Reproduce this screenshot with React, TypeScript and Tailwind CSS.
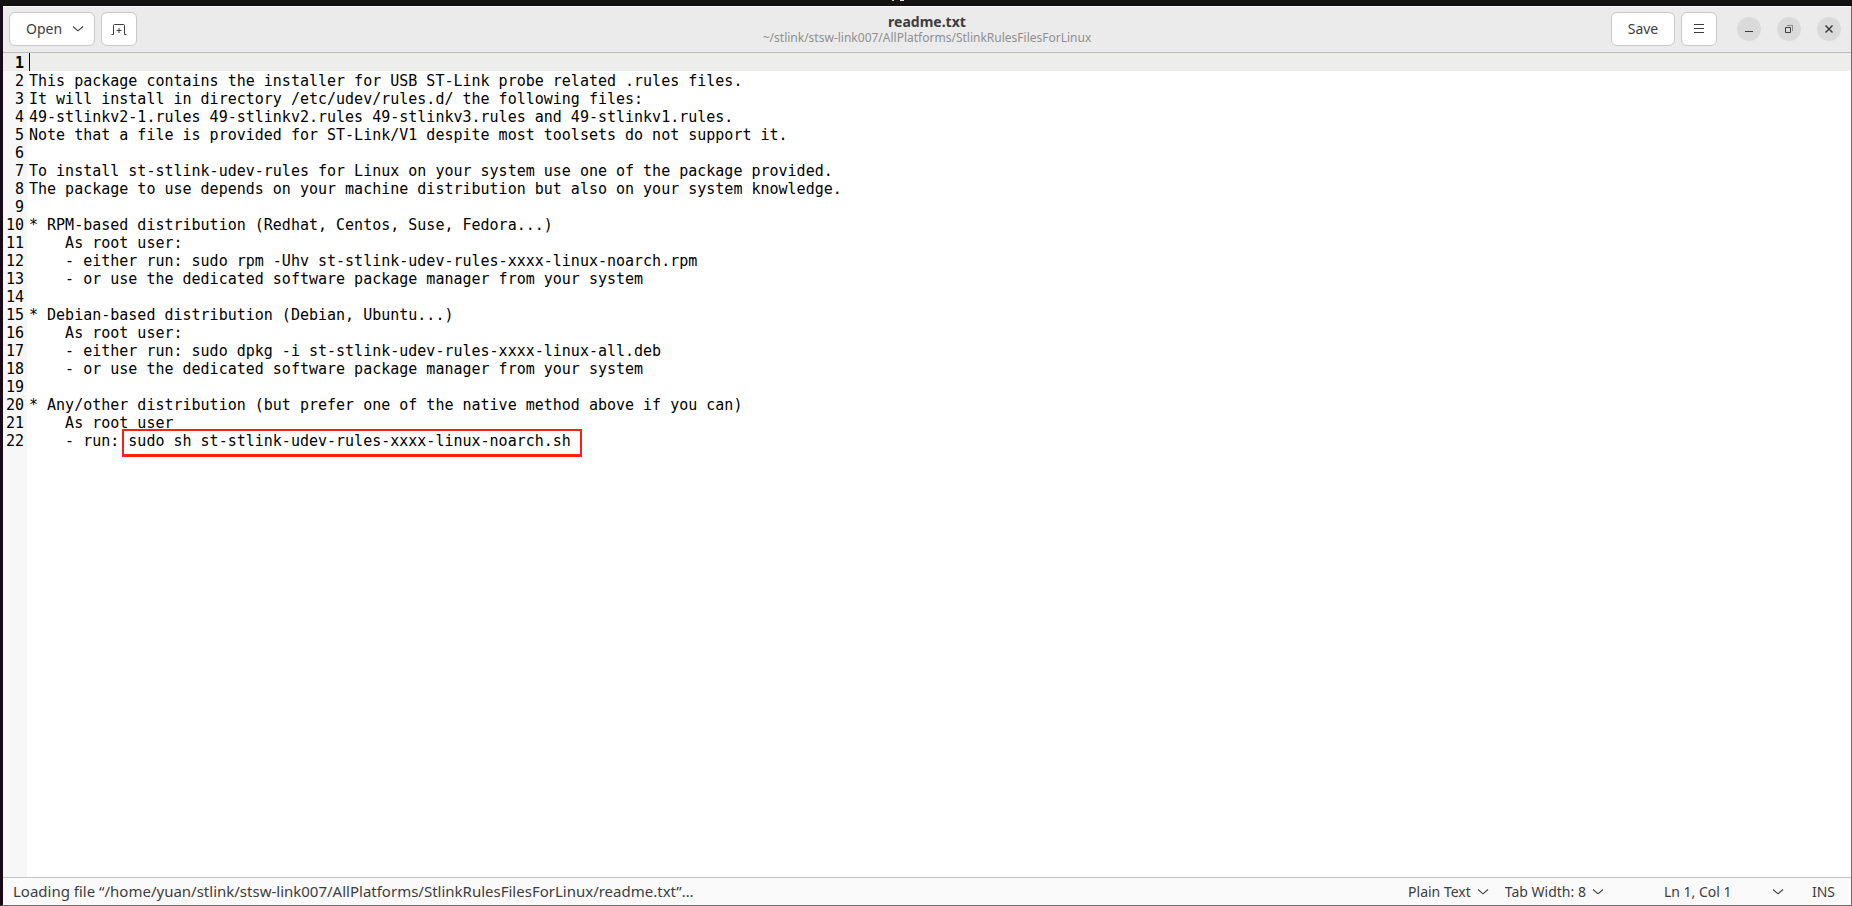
import { useState } from 'react';
import type { ReactNode } from 'react';

const README = `
This package contains the installer for USB ST-Link probe related .rules files.
It will install in directory /etc/udev/rules.d/ the following files:
49-stlinkv2-1.rules 49-stlinkv2.rules 49-stlinkv3.rules and 49-stlinkv1.rules.
Note that a file is provided for ST-Link/V1 despite most toolsets do not support it.

To install st-stlink-udev-rules for Linux on your system use one of the package provided.
The package to use depends on your machine distribution but also on your system knowledge.

* RPM-based distribution (Redhat, Centos, Suse, Fedora...)
    As root user:
    - either run: sudo rpm -Uhv st-stlink-udev-rules-xxxx-linux-noarch.rpm
    - or use the dedicated software package manager from your system

* Debian-based distribution (Debian, Ubuntu...)
    As root user:
    - either run: sudo dpkg -i st-stlink-udev-rules-xxxx-linux-all.deb
    - or use the dedicated software package manager from your system

* Any/other distribution (but prefer one of the native method above if you can)
    As root user
    - run: sudo sh st-stlink-udev-rules-xxxx-linux-noarch.sh`;

function Chevron() {
  return (
    <svg width="12" height="12" viewBox="0 0 12 12" fill="none" stroke="currentColor" strokeWidth="1.1" className="pointer-events-none shrink-0">
      <path d="M1 3.5 L6 7.8 L11 3.5" />
    </svg>
  );
}

interface HeaderButtonProps {
  label: string;
  className: string;
  children: ReactNode;
}

function HeaderButton({ label, className, children }: HeaderButtonProps) {
  return (
    <button
      aria-label={label}
      className={`flex h-[34px] items-center justify-center rounded-md border border-[#c9c9c9] bg-white active:bg-[#eeeeee] ${className}`}
    >
      {children}
    </button>
  );
}

function WindowButton({ label, children }: { label: string; children: ReactNode }) {
  return (
    <button aria-label={label} className="flex size-6 items-center justify-center rounded-full bg-[#dadada] hover:bg-[#cfcfcf]">
      <svg width="16" height="16" viewBox="0 0 16 16" fill="none" stroke="currentColor">
        {children}
      </svg>
    </button>
  );
}

interface StatusSelectProps {
  label: string;
  options: string[];
}

function StatusSelect({ label, options }: StatusSelectProps) {
  return (
    <label className="flex items-center gap-1.5">
      <select aria-label={label} className="field-sizing-content appearance-none bg-transparent outline-none">
        {options.map((option) => (
          <option key={option}>{option}</option>
        ))}
      </select>
      <Chevron />
    </label>
  );
}

function HeaderBar() {
  return (
    <header className="grid h-[47px] shrink-0 grid-cols-[1fr_auto_1fr] items-center border-t border-b border-t-white border-b-[#bcbcbc] bg-[#ebebeb] px-1.5 pb-px">
      <div className="flex gap-1.5">
        <HeaderButton label="Open" className="w-[86px] gap-2.5 pl-1.5">
          <span>Open</span>
          <Chevron />
        </HeaderButton>
        <HeaderButton label="New tab" className="w-9">
          <svg width="16" height="16" viewBox="0 0 16 16" fill="none" stroke="currentColor">
            <path d="M0.5 13.5 H2.5 V4.5 Q2.5 3.5 3.5 3.5 H12.5 Q13.5 3.5 13.5 4.5 V13.5 H15.5" />
            <path d="M8 7 V12 M5.5 9.5 H10.5" />
          </svg>
        </HeaderButton>
      </div>
      <div className="pt-0.5 text-center">
        <h1 className="text-sm leading-4 font-bold">readme.txt</h1>
        <p className="text-xs leading-4 text-[#8f8f8f]">~/stlink/stsw-link007/AllPlatforms/StlinkRulesFilesForLinux</p>
      </div>
      <div className="flex items-center justify-end pr-1">
        <HeaderButton label="Save" className="mr-1.5 w-16">
          Save
        </HeaderButton>
        <HeaderButton label="Menu" className="mr-5 w-9">
          <svg width="16" height="16" viewBox="0 0 16 16" fill="none" stroke="currentColor">
            <path d="M3 3.5 H13 M3 7.5 H13 M3 11.5 H13" />
          </svg>
        </HeaderButton>
        <div className="flex gap-4">
          <WindowButton label="Minimize">
            <path d="M4 10.5 H12" />
          </WindowButton>
          <WindowButton label="Restore">
            <path d="M4.5 6.5 H9.5 V11.5 H4.5 Z" />
            <path d="M6 4.5 H11.5 V10" opacity="0.5" />
          </WindowButton>
          <WindowButton label="Close">
            <path d="M4.5 4.5 L11.5 11.5 M11.5 4.5 L4.5 11.5" strokeWidth="1.5" />
          </WindowButton>
        </div>
      </div>
    </header>
  );
}

function Editor() {
  const [text, setText] = useState(README);
  const lines = text.split('\n');

  return (
    <main className="relative flex flex-1 bg-white font-['DejaVu_Sans_Mono','Liberation_Mono',monospace] text-[15px] leading-[18px] text-black">
      <div className="w-6 shrink-0 bg-[#f7f7f7]" />
      <div className="absolute inset-x-0 top-0 h-[18px] bg-[#ededeb]" />
      <ol className="absolute top-0 left-0 w-[21px] pt-px text-right">
        {lines.map((_, i) => (
          <li key={i} className={i === 0 ? 'font-bold' : ''}>
            {i + 1}
          </li>
        ))}
      </ol>
      <textarea
        aria-label="Document"
        value={text}
        onChange={(e) => setText(e.target.value)}
        spellCheck={false}
        wrap="off"
        className="relative flex-1 resize-none overflow-hidden bg-transparent pt-px pl-0.5 outline-none"
      />
      <div className="absolute top-0 left-[26px] h-[18px] w-px bg-black" />
      <div className="pointer-events-none absolute top-[376px] left-[119px] h-7 w-[460px] border-2 border-b-3 border-[#fb2012]" />
    </main>
  );
}

function StatusBar() {
  return (
    <footer className="flex h-7 shrink-0 items-center border-t border-[#c4c4c4] bg-[#fafafa] pr-4 pl-2.5">
      <p className="flex-1 text-[15px]">
        Loading file “/home/yuan/stlink/stsw-link007/AllPlatforms/StlinkRulesFilesForLinux/readme.txt”…
      </p>
      <div className="flex items-center gap-4">
        <StatusSelect label="Highlight mode" options={['Plain Text', 'Markdown', 'C', 'Python']} />
        <StatusSelect label="Tab width" options={['Tab Width: 8', 'Tab Width: 4', 'Tab Width: 2']} />
        <button className="ml-11 flex w-[120px] items-center justify-between">
          <span>Ln 1, Col 1</span>
          <Chevron />
        </button>
        <span className="ml-3">INS</span>
      </div>
    </footer>
  );
}

export default function App() {
  return (
    <div className="flex min-h-screen flex-col bg-[#131313] font-['Noto_Sans','Open_Sans',sans-serif] text-sm text-[#3d3d3d]">
      <div className="flex h-1.5 shrink-0 justify-center gap-1.5 border-b border-[#1a0716] pr-14">
        <span className="h-px w-0.5 bg-[#d8d0c0]" />
        <span className="h-px w-1 bg-[#e8e8e8]" />
      </div>
      <div className="flex flex-1 flex-col border-r border-b border-l-3 border-r-[#6b6b6b] border-b-[#6b6b6b] border-l-[#1a0a18]">
        <HeaderBar />
        <Editor />
        <StatusBar />
      </div>
    </div>
  );
}
